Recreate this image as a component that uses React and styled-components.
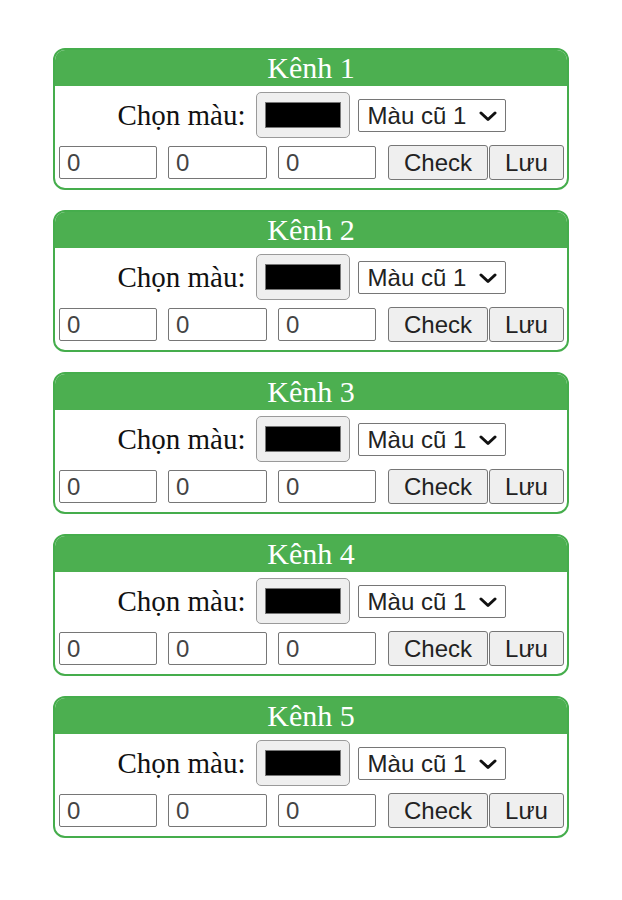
import React from 'react';
import styled, { createGlobalStyle } from 'styled-components';

const GlobalStyle = createGlobalStyle`
  body {
    margin: 0;
    background: #ffffff;
    font-family: "Liberation Serif", "Times New Roman", serif;
  }
`;

const Page = styled.main`
  display: flex;
  flex-direction: column;
  align-items: center;
  gap: 20px;
  padding-top: 48px;
`;

const Card = styled.section`
  width: 516px;
  box-sizing: border-box;
  border: 2px solid #45ad4c;
  border-radius: 12px;
  overflow: hidden;
  background: #ffffff;
`;

const CardHeader = styled.h2`
  margin: 0;
  height: 36px;
  line-height: 36px;
  background: #4caf50;
  color: #ffffff;
  text-align: center;
  font-family: "Liberation Serif", "Times New Roman", serif;
  font-weight: normal;
  font-size: 30px;
`;

const CardBody = styled.div`
  display: flex;
  flex-direction: column;
  padding: 6px 3px 8px 4px;
  gap: 7px;
`;

const ColorRow = styled.div`
  display: flex;
  align-items: center;
  justify-content: center;
  height: 46px;
`;

const Label = styled.span`
  font-family: "Liberation Serif", "Times New Roman", serif;
  font-size: 29px;
  color: #111111;
  margin-right: 10px;
`;

const ColorButton = styled.button`
  width: 94px;
  height: 46px;
  box-sizing: border-box;
  border: 1px solid #9a9a9a;
  border-radius: 5px;
  background: #efefef;
  padding: 0;
  display: flex;
  align-items: center;
  justify-content: center;
  margin-right: 8px;
`;

const Swatch = styled.span`
  display: block;
  width: 76px;
  height: 26px;
  box-sizing: border-box;
  border: 1px solid #777777;
  background: ${(p) => p.color};
`;

const SelectWrap = styled.div`
  position: relative;
  width: 148px;
  height: 33px;
`;

const Select = styled.select`
  appearance: none;
  width: 100%;
  height: 100%;
  box-sizing: border-box;
  border: 1px solid #767676;
  border-radius: 2px;
  background: #ffffff;
  padding: 0 0 0 9px;
  font-family: "Liberation Sans", Arial, sans-serif;
  font-size: 24px;
  color: #222222;
`;

const Chevron = styled.svg`
  position: absolute;
  right: 9px;
  top: 12px;
  pointer-events: none;
`;

const ValueRow = styled.div`
  display: flex;
  align-items: center;
  height: 35px;
`;

const NumberInput = styled.input`
  width: ${(p) => p.w}px;
  height: 33px;
  box-sizing: border-box;
  border: 1px solid #767676;
  border-radius: 2px;
  padding: 0 0 0 7px;
  margin-right: ${(p) => p.gap}px;
  font-family: "Liberation Sans", Arial, sans-serif;
  font-size: 24px;
  color: #444444;
  background: #ffffff;
`;

const Button = styled.button`
  width: ${(p) => p.w}px;
  height: 35px;
  box-sizing: border-box;
  border: 1px solid #767676;
  border-radius: 3px;
  background: #efefef;
  padding: 0;
  margin-right: ${(p) => p.gap || 0}px;
  font-family: "Liberation Sans", Arial, sans-serif;
  font-size: 24px;
  color: #222222;
`;

const channels = [1, 2, 3, 4, 5];

const Channel = ({ id }) => (
  <Card>
    <CardHeader>Kênh {id}</CardHeader>
    <CardBody>
      <ColorRow>
        <Label>Chọn màu:</Label>
        <ColorButton type="button" aria-label="Chọn màu">
          <Swatch color="#000000" />
        </ColorButton>
        <SelectWrap>
          <Select defaultValue="1">
            <option value="1">Màu cũ 1</option>
            <option value="2">Màu cũ 2</option>
            <option value="3">Màu cũ 3</option>
          </Select>
          <Chevron width="18" height="11" viewBox="0 0 18 11">
            <path d="M2 2 L9 8.5 L16 2" fill="none" stroke="#111" strokeWidth="3" strokeLinecap="round" strokeLinejoin="round" />
          </Chevron>
        </SelectWrap>
      </ColorRow>
      <ValueRow>
        <NumberInput w={98} gap={11} defaultValue="0" />
        <NumberInput w={99} gap={11} defaultValue="0" />
        <NumberInput w={98} gap={12} defaultValue="0" />
        <Button w={100} gap={1}>Check</Button>
        <Button w={75}>Lưu</Button>
      </ValueRow>
    </CardBody>
  </Card>
);

export default function App() {
  return (
    <>
      <GlobalStyle />
      <Page>
        {channels.map((id) => (
          <Channel key={id} id={id} />
        ))}
      </Page>
    </>
  );
}
